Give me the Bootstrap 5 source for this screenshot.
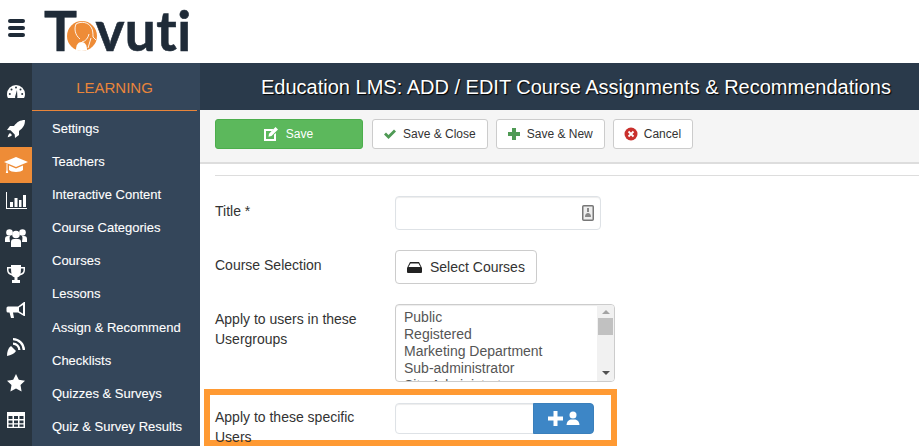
<!DOCTYPE html>
<html lang="en">
<head>
    <meta charset="UTF-8">
    <title>Education LMS: ADD / EDIT Course Assignments &amp; Recommendations</title>
    <link href="https://cdn.jsdelivr.net/npm/bootstrap@5.3.2/dist/css/bootstrap.min.css" rel="stylesheet">
    <style>
        html, body { height: 100%; }
        body { font-family: "Liberation Sans", Arial, sans-serif; color: #333; overflow: hidden; background: #fff; }

        .top-strip { height: 63px; }
        .burger { width: 17px; margin-left: 8px; margin-right: 19px; margin-top: -7px; }
        .burger span { display: block; height: 4px; border-radius: 2px; background: #1f2b38; margin-bottom: 3px; }
        .brand { font-family: Lato, "Liberation Sans", sans-serif; font-weight: 700; font-size: 55px; line-height: 63px; letter-spacing: .4px; color: #1f2b38; -webkit-text-stroke: .6px #1f2b38; margin-top: -3px; white-space: nowrap; }
        .brand svg { width: 30px; height: 30px; margin-left: -10px; margin-right: -2px; vertical-align: 0; }

        .work-area { height: 383px; }
        .icon-rail { width: 32px; background: #28343f; padding-top: 11px; }
        .rail-item { height: 36.4px; }
        .rail-item svg { width: 20px; height: 20px; fill: #fff; }
        .rail-item.active-item { background: #ee8c37; }

        .side-menu { width: 168px; background: #34465a; }
        .side-title { height: 48px; width: 165px; color: #e9853a; font-size: 15px; border-bottom: 1px solid #e9853a; padding-top: 4px; }
        .side-menu a { display: block; height: 33.1px; line-height: 35px; padding-left: 20px; color: #fff; font-size: 13px; text-decoration: none; -webkit-text-stroke: .1px #fff; }

        .page-head { height: 47px; background: #2a3a4b; color: #fff; font-size: 20px; padding-left: 61px; text-shadow: 1px 1px 1px #000; white-space: nowrap; }
        .tool-row { height: 54px; background: #f5f5f5; border-bottom: 2px solid #ddd; padding-left: 15px; padding-top: 9px; }
        .tool-btn { height: 30px; font-size: 12px; padding: 0 11px 0 10px; border-radius: 3px; border: 1px solid #ccc; background: #fff; color: #333; gap: 6px; }
        .tool-btn.save-btn { width: 148px; background: #5cb85c; border-color: #4cae4c; color: #fff; margin-right: 1px; gap: 8px; }
        .tool-btn svg { width: 14px; height: 14px; }
        .form-zone { padding-left: 15px; }
        .thin-rule { height: 1px; background: #ddd; margin: 11px 0 20px; }
        .form-line { margin-bottom: 20px; }
        .form-line label { width: 180px; font-size: 14px; line-height: 20px; margin: 0; }
        .lift-label { margin-top: -4px !important; }
        .drop-label { padding-top: 5px; }
        .title-input { width: 206px; height: 34px; border-radius: 4px; box-shadow: inset 0 1px 1px rgba(0,0,0,.075); }
        .input-mark { right: 7px; top: 9px; width: 12px; height: 16px; }
        .pick-btn { height: 34px; width: 142px; font-size: 14px; border: 1px solid #ccc; background: #fff; color: #333; border-radius: 4px; padding: 0; }
        .pick-btn svg { width: 15px; height: 12px; margin-right: 4px; vertical-align: -1px; }
        .group-list { width: 220px; height: 78px; border: 1px solid #ccc; border-radius: 4px; overflow: hidden; font-size: 14px; line-height: 17px; color: #555; box-shadow: inset 0 1px 1px rgba(0,0,0,.075); }
        .group-items { padding: 4px 8px; white-space: nowrap; }
        .fake-scroll { width: 17px; background: #f1f1f1; }
        .fake-thumb { height: 17px; margin: 4px 1px 0; background: #c1c1c1; }
        .arrow-up, .arrow-down { width: 0; height: 0; border-left: 4px solid transparent; border-right: 4px solid transparent; margin: 5px auto 0; }
        .arrow-up { border-bottom: 4px solid #a3a3a3; }
        .arrow-down { border-top: 4px solid #505050; margin: auto auto 6px; }

        .user-box { width: 413px; height: 57px; border: 6px solid #ff9a33; margin-left: -11px; margin-top: -13px; padding-left: 5px; }
        .user-box label { width: 180px; flex-shrink: 0; font-size: 14px; line-height: 20px; padding: 12px 20px 0 0; }
        .user-group { width: 199px; margin-top: 8px; }
        .user-group .form-control { height: 31px; border-radius: 4px 0 0 4px; padding: 0 6px; box-shadow: inset 0 1px 1px rgba(0,0,0,.075); }
        .user-group .btn { width: 61px; height: 31px; background: #3d86c6; border: 1px solid #3a7fbb; border-radius: 0 4px 4px 0; padding: 0; }
        .user-group svg { width: 32px; height: 15px; fill: #fff; }
    </style>
</head>
<body>

<div class="top-strip d-flex align-items-center">
    <div class="burger"><span></span><span></span><span class="mb-0"></span></div>
    <div class="brand">T<svg viewBox="0 0 30 30"><circle cx="15" cy="15" r="15" fill="#ee8c37"/><path d="M9 29c0-5 2-8 5.500-8s5.500 3 5.500 8c-3.500 1.300-7.500 1.300-11 0z" fill="#fff"/><path d="M9 3c-2 5-1 11 4 15M9 3c5-3 12-2 15 3 2 3 2 7 2 10l3 3M24 17l-3 10M22 13c-1 4-3 7-7 8" fill="none" stroke="#fff" stroke-width=".9"/></svg>vuti</div>
</div>

<div class="work-area d-flex">
    <div class="icon-rail flex-shrink-0">
        <div class="rail-item d-flex align-items-center justify-content-center">
            <svg viewBox="0 0 20 20"><path d="M10 3a9 9 0 0 0-9 9c0 1.700.4 3 1 4h16c.6-1 1-2.300 1-4a9 9 0 0 0-9-9z"/><g fill="#28343f"><circle cx="10" cy="5.500" r="1"/><circle cx="5.500" cy="7.500" r="1"/><circle cx="14.500" cy="7.500" r="1"/><circle cx="3.800" cy="12" r="1"/><circle cx="16.200" cy="12" r="1"/><path d="M9 15l2-7 .4 7.200a1.200 1.200 0 0 1-2.400-.2z"/></g></svg>
        </div>
        <div class="rail-item d-flex align-items-center justify-content-center">
            <svg viewBox="0 0 20 20"><path d="M19 1c-5 0-8 2-11 6H4L1 11l3.500.3 4.200 4.200.3 3.500 4-3v-4c4-3 6-6 6-11z"/><path d="M4 14c-1.500 1-2 3-2.300 4.300C3 18 5 17.500 6 16z"/></svg>
        </div>
        <div class="rail-item active-item d-flex align-items-center justify-content-center">
            <svg viewBox="0 0 24 20" style="width:24px"><path d="M12 2 0 7l12 5 12-5z"/><path d="M5 10.500V15c2 2.500 12 2.500 14 0v-4.500L12 13.500z"/><path d="M2.500 8.500h1V15l.7 3H1.800l.7-3z"/></svg>
        </div>
        <div class="rail-item d-flex align-items-center justify-content-center">
            <svg viewBox="0 0 22 20" style="width:22px"><path d="M1 1h1v16h20v1H1z"/><path d="M5 11h3v5H5zM9.500 7h3v9h-3zM14 9h2.500v7H14zM18 4h3v12h-3z"/></svg>
        </div>
        <div class="rail-item d-flex align-items-center justify-content-center">
            <svg viewBox="0 0 22 20" style="width:22px"><circle cx="4.500" cy="4.500" r="3.300"/><circle cx="17.500" cy="4.500" r="3.300"/><circle cx="11" cy="6.500" r="3.800"/><path d="M0 14v-3c0-2 1-3 3-3h2c-1 2 0 4 0 6zM22 14v-3c0-2-1-3-3-3h-2c1 2 0 4 0 6zM6 19v-5c0-2 1-3 3-3h4c2 0 3 1 3 3v5z"/></svg>
        </div>
        <div class="rail-item d-flex align-items-center justify-content-center">
            <svg viewBox="0 0 20 20"><path d="M5 1h10v2h4v3c0 3-2 5-5 5.500-.7 1-1.500 1.500-2.500 1.800V16H14v3H6v-3h2.500v-2.700C7.500 13 6.700 12.500 6 11.500 3 11 1 9 1 6V3h4zM5 4.500H2.500V6c0 2 1 3 3 3.700-.3-1.500-.5-3.500-.5-5.200zM15 4.500c0 1.700-.2 3.700-.5 5.200 2-.7 3-1.700 3-3.700V4.500z" fill-rule="evenodd"/></svg>
        </div>
        <div class="rail-item d-flex align-items-center justify-content-center">
            <svg viewBox="0 0 20 20"><path d="M18 1h1v14h-1l-6-3.500H7l1 5.500H5l-1.500-5.500H2A1.500 1.500 0 0 1 .5 10V7A1.500 1.500 0 0 1 2 5.500h10zM17 4l-4 2.500v3.800l4 2.500z" fill-rule="evenodd"/></svg>
        </div>
        <div class="rail-item d-flex align-items-center justify-content-center">
            <svg viewBox="0 0 20 20"><path d="M1 19c0-4 1-8 4-10l5 5c-2 3-5 4-9 5z"/><path d="M7 1a12 12 0 0 1 12 12h-2.300A9.700 9.700 0 0 0 7 3.300zM7 5.500a7.500 7.500 0 0 1 7.500 7.500h-2.300A5.200 5.200 0 0 0 7 7.800z"/></svg>
        </div>
        <div class="rail-item d-flex align-items-center justify-content-center">
            <svg viewBox="0 0 20 20"><path d="m10 1 2.800 5.800 6.200.9-4.500 4.400 1.100 6.300L10 15.400l-5.600 3 1.100-6.300L1 7.700l6.200-.9z"/></svg>
        </div>
        <div class="rail-item d-flex align-items-center justify-content-center">
            <svg viewBox="0 0 20 18"><path fill-rule="evenodd" d="M1 1h18v16H1zM2.500 5v3h4V5zm5.500 0v3h4V5zm5.500 0v3h4V5zM2.500 9.500v2.800h4V9.500zm5.500 0v2.800h4V9.500zm5.500 0v2.800h4V9.500zM2.500 13.500v2.200h4v-2.200zm5.500 0v2.200h4v-2.200zm5.500 0v2.200h4v-2.200z"/></svg>
        </div>
    </div>

    <div class="side-menu flex-shrink-0">
        <div class="side-title d-flex align-items-center justify-content-center">LEARNING</div>
        <a href="#">Settings</a>
        <a href="#">Teachers</a>
        <a href="#">Interactive Content</a>
        <a href="#">Course Categories</a>
        <a href="#">Courses</a>
        <a href="#">Lessons</a>
        <a href="#">Assign &amp; Recommend</a>
        <a href="#">Checklists</a>
        <a href="#">Quizzes &amp; Surveys</a>
        <a href="#">Quiz &amp; Survey Results</a>
    </div>

    <div class="flex-grow-1">
        <div class="page-head d-flex align-items-center">Education LMS: ADD / EDIT Course Assignments &amp; Recommendations</div>
        <div class="tool-row d-flex gap-2">
            <button type="button" class="btn tool-btn save-btn d-flex align-items-center justify-content-center">
                <svg viewBox="0 0 14 14" fill="#fff"><path fill-rule="evenodd" d="M0 2h9.500L8 4H2v8h8V7.500L12 6v8H0z"/><path d="M11.500 0 14 2.500 7.500 9 4.500 9.800 5 6.800z"/></svg>
                Save
            </button>
            <button type="button" class="btn tool-btn d-flex align-items-center">
                <svg viewBox="0 0 14 14" fill="#4f9a55"><path d="M1 7.500 3 5.500l2.500 2.500L11 2.500l2 2-7.500 7.500z"/></svg>
                Save &amp; Close
            </button>
            <button type="button" class="btn tool-btn d-flex align-items-center">
                <svg viewBox="0 0 14 14" fill="#4f9a55"><path d="M5 1h4v4h4v4H9v4H5V9H1V5h4z"/></svg>
                Save &amp; New
            </button>
            <button type="button" class="btn tool-btn d-flex align-items-center">
                <svg viewBox="0 0 14 14"><circle cx="7" cy="7" r="6.500" fill="#c9302c"/><path d="m4.500 4.500 5 5m0-5-5 5" stroke="#fff" stroke-width="1.800"/></svg>
                Cancel
            </button>
        </div>

        <div class="form-zone">
            <div class="thin-rule"></div>

            <div class="form-line d-flex align-items-center">
                <label for="titleField" class="lift-label">Title *</label>
                <div class="position-relative">
                    <input type="text" class="form-control title-input" id="titleField">
                    <svg class="input-mark position-absolute" viewBox="0 0 12 16"><rect x=".75" y=".75" width="10.500" height="14.500" rx="1" fill="#eee" stroke="#777" stroke-width="1.500"/><path d="M5 3h2v4H5z" fill="#888"/><path d="M3 12c0-3 1.500-4 3-4s3 1 3 4z" fill="#888"/></svg>
                </div>
            </div>

            <div class="form-line d-flex align-items-center">
                <label class="lift-label">Course Selection</label>
                <button type="button" class="btn pick-btn">
                    <svg viewBox="0 0 15 12"><path d="M3 1h9l3 6v4a1 1 0 0 1-1 1H1a1 1 0 0 1-1-1V7z" fill="#222"/><path d="M3.500 2.500h8l2 3.500H1.500z" fill="#fff"/></svg>
                    Select Courses
                </button>
            </div>

            <div class="form-line d-flex align-items-start">
                <label class="drop-label">Apply to users in these Usergroups</label>
                <div class="group-list d-flex">
                    <div class="group-items flex-grow-1">
                        <div>Public</div>
                        <div>Registered</div>
                        <div>Marketing Department</div>
                        <div>Sub-administrator</div>
                        <div>Site Administrator</div>
                    </div>
                    <div class="fake-scroll d-flex flex-column flex-shrink-0">
                        <div class="arrow-up"></div>
                        <div class="fake-thumb"></div>
                        <div class="arrow-down"></div>
                    </div>
                </div>
            </div>

            <div class="user-box d-flex align-items-start">
                <label for="userField">Apply to these specific Users</label>
                <div class="input-group user-group flex-nowrap">
                    <input type="text" class="form-control" id="userField">
                    <button type="button" class="btn d-flex align-items-center justify-content-center">
                        <svg viewBox="0 0 32 15"><path d="M5.500 0h4v5.500H15v4H9.500V15h-4V9.500H0v-4h5.500z"/><circle cx="25" cy="4" r="3.500"/><path d="M18.500 14c0-3 2-5 4-5.500h5c2 .5 4 2.500 4 5.500z"/></svg>
                    </button>
                </div>
            </div>
        </div>
    </div>
</div>

</body>
</html>
